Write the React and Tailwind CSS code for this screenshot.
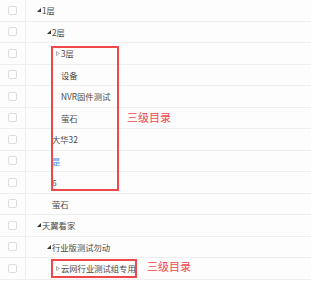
import React from 'react';

const rows = [
    {label: '1层', indent: 37, icon: 'open'},
    {label: '2层', indent: 47, icon: 'open'},
    {label: '3层', indent: 56, icon: 'closed'},
    {label: '设备', indent: 61},
    {label: 'NVR固件测试', indent: 61},
    {label: '萤石', indent: 61},
    {label: '大华32', indent: 52},
    {label: '是', indent: 52, blue: true},
    {label: '6', indent: 52},
    {label: '萤石', indent: 52},
    {label: '天翼看家', indent: 37, icon: 'open'},
    {label: '行业版测试勿动', indent: 47, icon: 'open'},
    {label: '云网行业测试组专用', indent: 56, icon: 'closed'},
];

const OpenIcon = () => (
    <svg width="4" height="4" viewBox="0 0 4 4" className="mr-[1px]">
        <polygon points="4,0 4,4 0,4" fill="#333"/>
    </svg>
);

const ClosedIcon = () => (
    <svg width="4" height="5" viewBox="0 0 4 5" className="mr-[1px]">
        <polygon points="0.5,0.5 3.5,2.5 0.5,4.5" fill="none" stroke="#b0b0b0" strokeWidth="1"/>
    </svg>
);

const Row = ({row}) => (
    <div className="flex h-[21.5px] border-b border-[#efefef]">
        <div className="w-[26px] shrink-0 border-r border-[#eeeeee] flex items-center justify-center">
            <div className="w-[9px] h-[9px] rounded-[2px] border border-[#dcdcdc] bg-white"/>
        </div>
        <div className="flex items-center" style={{paddingLeft: row.indent - 26}}>
            {row.icon === 'open' && <OpenIcon/>}
            {row.icon === 'closed' && <ClosedIcon/>}
            <span className={`text-[8.3px] leading-none ${row.blue ? 'text-[#4a8fe0]' : 'text-[#4a4a4a]'}`}>
                {row.label}
            </span>
        </div>
    </div>
);

export default function App() {
    return (
        <div className="relative w-[311px] h-[292px] bg-white overflow-hidden"
             style={{fontFamily: '"Noto Sans CJK SC", "Liberation Sans", sans-serif'}}>
            <div className="bg-[#fdfdfd]">
                {rows.map((row, i) => <Row key={i} row={row}/>)}
            </div>

            {/* annotation: first box */}
            <div className="absolute left-[51px] top-[46px] w-[68px] h-[145px] border-2 border-[#f0474a]"/>
            <div className="absolute left-[127px] top-[112px] text-[11px] leading-none text-[#f0474a]">三级目录</div>

            {/* annotation: second box */}
            <div className="absolute left-[51px] top-[259px] w-[86px] h-[19px] border-2 border-[#f0474a]"/>
            <div className="absolute left-[147px] top-[261px] text-[11px] leading-none text-[#f0474a]">三级目录</div>
        </div>
    );
}
